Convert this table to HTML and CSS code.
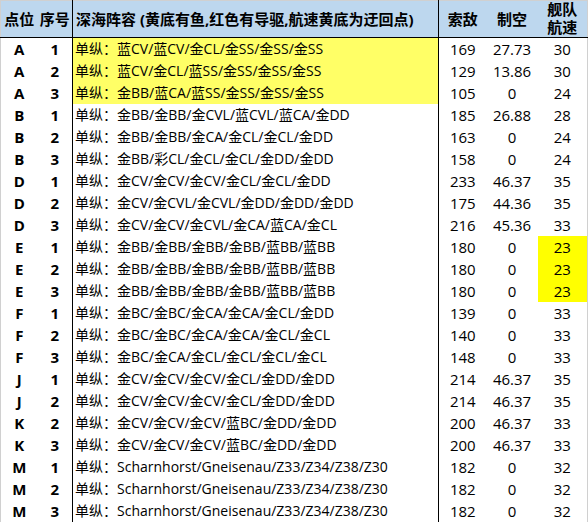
FILE: index.html
```html
<!DOCTYPE html>
<html lang="zh-CN">
<head>
<meta charset="utf-8">
<title>深海阵容</title>
<link rel="stylesheet" href="styles.css">
</head>
<body>
<table class="sheet">
  <colgroup>
    <col class="w-pt"><col class="w-no"><col class="w-fleet"><col class="w-los"><col class="w-air"><col class="w-spd">
  </colgroup>
  <thead>
    <tr class="head">
      <th class="pt">点位</th>
      <th class="no">序号</th>
      <th class="fleet">深海阵容 (黄底有鱼,红色有导驱,航速黄底为迂回点)</th>
      <th class="num">索敌</th>
      <th class="num">制空</th>
      <th class="num spdh"><span class="ln">舰队</span><span class="ln">航速</span></th>
    </tr>
  </thead>
  <tbody>
    <tr><td class="pt">A</td><td class="no">1</td><td class="fleet hl">单纵：蓝CV/蓝CV/金CL/金SS/金SS/金SS</td><td class="num">169</td><td class="num">27.73</td><td class="num">30</td></tr>
    <tr><td class="pt">A</td><td class="no">2</td><td class="fleet hl">单纵：蓝CV/金CL/蓝SS/金SS/金SS/金SS</td><td class="num">129</td><td class="num">13.86</td><td class="num">30</td></tr>
    <tr><td class="pt">A</td><td class="no">3</td><td class="fleet hl">单纵：金BB/蓝CA/蓝SS/金SS/金SS/金SS</td><td class="num">105</td><td class="num">0</td><td class="num">24</td></tr>
    <tr><td class="pt">B</td><td class="no">1</td><td class="fleet">单纵：金BB/金BB/金CVL/蓝CVL/蓝CA/金DD</td><td class="num">185</td><td class="num">26.88</td><td class="num">28</td></tr>
    <tr><td class="pt">B</td><td class="no">2</td><td class="fleet">单纵：金BB/金BB/金CA/金CL/金CL/金DD</td><td class="num">163</td><td class="num">0</td><td class="num">24</td></tr>
    <tr><td class="pt">B</td><td class="no">3</td><td class="fleet">单纵：金BB/彩CL/金CL/金CL/金DD/金DD</td><td class="num">158</td><td class="num">0</td><td class="num">24</td></tr>
    <tr><td class="pt">D</td><td class="no">1</td><td class="fleet">单纵：金CV/金CV/金CV/金CL/金CL/金DD</td><td class="num">233</td><td class="num">46.37</td><td class="num">35</td></tr>
    <tr><td class="pt">D</td><td class="no">2</td><td class="fleet">单纵：金CV/金CVL/金CVL/金DD/金DD/金DD</td><td class="num">175</td><td class="num">44.36</td><td class="num">35</td></tr>
    <tr><td class="pt">D</td><td class="no">3</td><td class="fleet">单纵：金CV/金CV/金CVL/金CA/蓝CA/金CL</td><td class="num">216</td><td class="num">45.36</td><td class="num">33</td></tr>
    <tr><td class="pt">E</td><td class="no">1</td><td class="fleet">单纵：金BB/金BB/金BB/金BB/蓝BB/蓝BB</td><td class="num">180</td><td class="num">0</td><td class="num hl2">23</td></tr>
    <tr><td class="pt">E</td><td class="no">2</td><td class="fleet">单纵：金BB/金BB/金BB/金BB/蓝BB/蓝BB</td><td class="num">180</td><td class="num">0</td><td class="num hl2">23</td></tr>
    <tr><td class="pt">E</td><td class="no">3</td><td class="fleet">单纵：金BB/金BB/金BB/金BB/蓝BB/蓝BB</td><td class="num">180</td><td class="num">0</td><td class="num hl2">23</td></tr>
    <tr><td class="pt">F</td><td class="no">1</td><td class="fleet">单纵：金BC/金BC/金CA/金CA/金CL/金DD</td><td class="num">139</td><td class="num">0</td><td class="num">33</td></tr>
    <tr><td class="pt">F</td><td class="no">2</td><td class="fleet">单纵：金BC/金BC/金CA/金CA/金CL/金CL</td><td class="num">140</td><td class="num">0</td><td class="num">33</td></tr>
    <tr><td class="pt">F</td><td class="no">3</td><td class="fleet">单纵：金BC/金CA/金CL/金CL/金CL/金CL</td><td class="num">148</td><td class="num">0</td><td class="num">33</td></tr>
    <tr><td class="pt">J</td><td class="no">1</td><td class="fleet">单纵：金CV/金CV/金CV/金CL/金DD/金DD</td><td class="num">214</td><td class="num">46.37</td><td class="num">35</td></tr>
    <tr><td class="pt">J</td><td class="no">2</td><td class="fleet">单纵：金CV/金CV/金CV/金CL/金DD/金DD</td><td class="num">214</td><td class="num">46.37</td><td class="num">35</td></tr>
    <tr><td class="pt">K</td><td class="no">2</td><td class="fleet">单纵：金CV/金CV/金CV/蓝BC/金DD/金DD</td><td class="num">200</td><td class="num">46.37</td><td class="num">33</td></tr>
    <tr><td class="pt">K</td><td class="no">3</td><td class="fleet">单纵：金CV/金CV/金CV/蓝BC/金DD/金DD</td><td class="num">200</td><td class="num">46.37</td><td class="num">33</td></tr>
    <tr><td class="pt">M</td><td class="no">1</td><td class="fleet">单纵：Scharnhorst/Gneisenau/Z33/Z34/Z38/Z30</td><td class="num">182</td><td class="num">0</td><td class="num">32</td></tr>
    <tr><td class="pt">M</td><td class="no">2</td><td class="fleet">单纵：Scharnhorst/Gneisenau/Z33/Z34/Z38/Z30</td><td class="num">182</td><td class="num">0</td><td class="num">32</td></tr>
    <tr><td class="pt">M</td><td class="no">3</td><td class="fleet">单纵：Scharnhorst/Gneisenau/Z33/Z34/Z38/Z30</td><td class="num">182</td><td class="num">0</td><td class="num">32</td></tr>
  </tbody>
</table>
</body>
</html>
```

FILE: styles.css
```css
html, body {
  margin: 0;
  padding: 0;
  background: #ffffff;
}
body {
  font-family: "Open Sans", "Noto Sans CJK SC", sans-serif;
  color: #000;
}
.sheet {
  border-collapse: collapse;
  table-layout: fixed;
  width: 587px;
  border-top: 1px solid #d0d0d0;
  border-left: 1px solid #d0d0d0;
  border-right: 1px solid #d0d0d0;
}
.w-pt { width: 37px; }
.w-no { width: 35px; }
.w-fleet { width: 366px; }
.w-los { width: 48px; }
.w-air { width: 51px; }
.w-spd { width: 50px; }

th, td {
  padding: 0;
  white-space: nowrap;
  overflow: hidden;
}
.head th {
  background: #bdd7ee;
  height: 36px;
  font-family: "Open Sans", "Noto Sans CJK SC", sans-serif;
  font-weight: bold;
  font-size: 15px;
  line-height: 18px;
  text-align: center;
  border-bottom: 1px solid #000;
}
.head th.fleet {
  text-align: left;
  padding-left: 3px;
}
.head th.spdh {
  font-family: "Liberation Sans", "Noto Sans CJK SC", sans-serif;
  font-size: 15px;
  line-height: 18px;
}
.ln {
  display: block;
  height: 18px;
  line-height: 18px;
}
tbody td {
  height: 22px;
  line-height: 22px;
}
td.pt, td.no {
  font-weight: bold;
  font-size: 15px;
  text-align: center;
}
.no {
  border-right: 1px solid #000;
}
.fleet {
  border-right: 1px solid #000;
}
td.fleet {
  font-size: 14px;
  padding-left: 2px;
  text-align: left;
}
td.num {
  font-size: 15px;
  text-align: center;
}
td.hl {
  background: #ffff66;
}
td.hl2 {
  background: #ffff00;
}
```
